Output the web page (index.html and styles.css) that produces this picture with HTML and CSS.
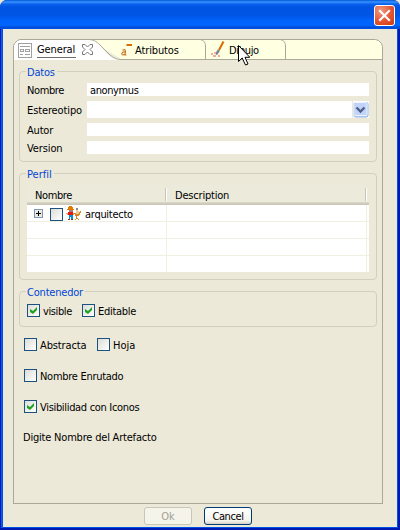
FILE: index.html
```
<!DOCTYPE html>
<html lang="es">
<head>
<meta charset="utf-8">
<title>Artefacto</title>
<link rel="stylesheet" href="styles.css">
</head>
<body>
<div class="window">
  <header class="titlebar">
    <button class="close" aria-label="Cerrar"><svg width="21" height="21" viewBox="0 0 21 21"><path d="M6 6l9 9M15 6l-9 9" stroke="#fff" stroke-width="2.2" stroke-linecap="square"/></svg></button>
  </header>
  <main class="client">
    <section class="folder">
      <nav class="tabs">
        <svg class="tabshape" width="370" height="21" viewBox="0 0 370 21">
          <path d="M75 .5H362.500L365.500 1.500L368.500 4.500L369.500 7.500V20.500H109Z" fill="#ffffe1"/>
          <path d="M.5 21V6.500L1.500 4.500L4.500 1.500L7 .5H75C92 .5 88 20.500 109 20.500V21Z" fill="#fff"/>
          <path d="M.5 21V6.500L1.500 4.500L4.500 1.500L7 .5H362.500L365.500 1.500L368.500 4.500L369.500 7.500V21M75 .5C80 .5 83 2 87 6L97 16C101 19 103 20.500 109 20.500H370M186 .5C190 .5 192.500 3 192.500 7V20.500M266 .5C270 .5 272.500 3 272.500 7V20.500" fill="none" stroke="#aca899"/>
        </svg>
        <div class="tab first">
          <svg class="formicon" width="14" height="15" viewBox="0 0 14 15" shape-rendering="crispEdges"><path d="M.5.5h13v14H.5zM2 3.500h10M2.500 6.500h3v2h-3zM7.500 6.500h4v2h-4zM2 11.500h3M7 11.500h5" fill="none" stroke="#a0a0a0"/></svg>
          <span class="t-general">General</span>
          <svg class="xicon" width="11" height="11" viewBox="0 0 11 11"><path d="M.5.500H3L5.500 3 8 .5h2.500V3L8 5.500 10.500 8v2.500H8L5.500 8 3 10.500H.5V8L3 5.500.5 3Z" fill="#fff" stroke="#777"/></svg>
        </div>
        <div class="tab second">
          <svg width="12" height="12" viewBox="0 0 12 12"><path d="M5.500 0H11V2H5.500Z" fill="#d96b00"/><path d="M1.500 6.200Q4.500 4.500 4.500 7.500L4 11H5.500M4.300 8Q.8 7.500.8 10 1 12 4 10" fill="none" stroke="#c7731f" stroke-width="1.100"/></svg>
          <span class="t-atr">Atributos</span>
        </div>
        <div class="tab third">
          <svg width="14" height="17" viewBox="0 0 14 17"><path d="M12.500.5L8 9" stroke="#d96b00" stroke-width="2"/><path d="M8 9L5 13.500" stroke="#808890" stroke-width="2.500"/><path d="M0 12h2v2H0zM3 11h2v2H3zM2 14h3v2H2zM7 14h2v2H7z" fill="#f4a9a4"/></svg>
          <span class="t-dib">Dibujo</span>
        </div>
      </nav>
      <div class="page">
        <fieldset class="datos">
          <legend class="t-datos">Datos</legend>
          <div class="fields">
            <label class="t-nom">Nombre</label><div class="input"><span class="t-anon">anonymus</span></div>
            <label class="t-est">Estereotipo</label>
            <div class="input combo"><svg width="17" height="17" viewBox="0 0 17 17"><rect width="1" height="17" fill="#ece9d8"/><rect x="2" y="1.500" width="14" height="14.500" rx="1.500" fill="#c1d3fb" stroke="#8fb0e0"/><rect x="2" y="1.500" width="13" height="13" rx="1" fill="none" stroke="#eef3ff"/><path d="M4.500 6.500l4 4 4-4" fill="none" stroke="#4d6185" stroke-width="2.400"/></svg></div>
            <label class="t-aut">Autor</label><div class="input"></div>
            <label class="t-ver">Version</label><div class="input"></div>
          </div>
        </fieldset>
        <fieldset class="perfil">
          <legend class="t-perfil">Perfil</legend>
          <div class="table">
            <div class="thead"><div><span class="t-nom">Nombre</span></div><div><span class="t-desc">Description</span></div></div>
            <div class="tr">
              <div class="node">
                <svg class="plus" width="9" height="9" viewBox="0 0 9 9" shape-rendering="crispEdges"><path d="M.5.5h8v8h-8z" fill="#eceae2" stroke="#7b98b8"/><path d="M2 4.500h5M4.500 2v5" stroke="#000"/></svg>
                <i class="box"></i>
                <svg class="people" width="16" height="15" viewBox="0 0 16 15" shape-rendering="crispEdges"><path d="M2 1h1V0h3v1h1v2H2zM1 3h7v1H1z" fill="#df7900"/><path d="M3 4h4v2H3z" fill="#b07870"/><path d="M2 6h5v3H2z" fill="#e01818"/><path d="M0 7h2v2H1v-1H0zM7 7h1v2H7z" fill="#f0a060"/><path d="M3 9h4v4H5v-2H4v2H3z" fill="#0a8ed0"/><path d="M2 13h2v1H2zM5 13h2v1H5z" fill="#803c18"/><path d="M10 3h2v2h1v3h-3z" fill="#e9cf91"/><path d="M10 2h2v2h-2z" fill="#858b91"/><path d="M14 5h1v2h-1v2h-1v1h-2v2h1v1h1v1h-1v-1h-2v1H9v-1h1v-3H9V8H8V7h2v1h3V6h1z" fill="#d98522"/></svg>
                <span class="t-arq">arquitecto</span>
              </div><div></div><div></div>
            </div>
            <div class="tr"><div></div><div></div><div></div></div>
            <div class="tr"><div></div><div></div><div></div></div>
            <div class="tr"><div></div><div></div><div></div></div>
          </div>
        </fieldset>
        <fieldset class="contenedor">
          <legend class="t-cont">Contenedor</legend>
          <div class="checks">
            <label class="check"><i class="box on"></i><span class="t-vis">visible</span></label>
            <label class="check"><i class="box on"></i><span class="t-edi">Editable</span></label>
          </div>
        </fieldset>
        <div class="options">
          <div class="checks">
            <label class="check abs"><i class="box"></i><span class="t-abs">Abstracta</span></label>
            <label class="check"><i class="box"></i><span class="t-hoja">Hoja</span></label>
          </div>
          <label class="check"><i class="box"></i><span class="t-enr">Nombre Enrutado</span></label>
          <label class="check"><i class="box on"></i><span class="t-ico">Visibilidad con Iconos</span></label>
        </div>
        <p class="message"><span class="t-dig">Digite Nombre del Artefacto</span></p>
      </div>
    </section>
    <footer class="actions">
      <button class="btn disabled" disabled><span>Ok</span></button>
      <button class="btn"><span class="t-can">Cancel</span></button>
    </footer>
  </main>
  <svg class="cursor" width="12" height="21" viewBox="0 0 12 21"><path d="M.5.5V16.500L4.200 13L7.500 20L10 19L7 12.300H11.800Z" fill="#fff" stroke="#000"/></svg>
</div>
</body>
</html>
```
FILE: styles.css
```
* { box-sizing: border-box; }
body { margin: 0; background: #ece9d8; }
body, button {
  font-family: "DejaVu Sans Condensed", "DejaVu Sans", sans-serif;
  font-stretch: condensed;
  font-size: 11px;
  line-height: 13px;
  color: #000;
}
span, legend, label { white-space: nowrap; }
svg { display: block; flex: none; }

.t-general, .t-atr, .t-est, .t-ver, .t-abs { letter-spacing: -.12px; }
.t-datos, .t-aut, .t-cont, .t-desc, .t-dig { letter-spacing: -.2px; }
.t-edi, .t-enr, .t-arq { letter-spacing: -.28px; }
.t-ico, .t-dib { letter-spacing: -.32px; }
.t-nom, .t-anon, .t-vis, .t-can { letter-spacing: -.4px; }

.window {
  position: relative;
  width: 400px;
  height: 530px;
  display: flex;
  flex-direction: column;
  background: #0019b0;
  border-radius: 7px 7px 0 0;
  overflow: hidden;
}
.titlebar {
  height: 29px;
  flex: none;
  display: flex;
  justify-content: flex-end;
  padding: 5px 5px 0 0;
  background: linear-gradient(#0058d8 0, #3a93ff 2px, #0a63ee 4px, #0054e3 7px, #0055e5 15px, #0064fb 21px, #0066ff 25px, #0052df 27px, #0041c4 29px);
}
.close {
  width: 21px;
  height: 21px;
  padding: 0;
  border: 1px solid #fff;
  border-radius: 3px;
  background: radial-gradient(circle at 30% 25%, #f09a80, #e35432 55%, #c93a12);
}
.close svg { margin: -1px; }
.client {
  flex: 1;
  margin: 0 3px 3px;
  padding: 10px 14px 0 10px;
  background: #ece9d8;
  box-shadow: 0 0 0 1px #0050e6, -1px 0 0 1px #0a5cf0;
}
.folder { height: 465px; display: flex; flex-direction: column; width: 370px; }
.tabs { position: relative; height: 21px; flex: none; display: flex; }
.tabshape { position: absolute; left: 0; top: 0; }
.tab { position: relative; display: flex; align-items: flex-start; }
.first { width: 107px; padding: 4px 0 0 5px; }
.first span { margin-left: 5px; width: 39px; height: 15px; border-bottom: 1px solid #716f64; }
.xicon { margin: 1px 0 0 6px; }
.second { width: 88px; padding: 5px 0 0 1px; }
.second span { margin-left: 2px; }
.third { padding: 2px 0 0 3px; }
.third span { margin: 3px 0 0 4px; }
.page { flex: 1; border: solid #aca899; border-width: 0 1px 1px; padding: 5px 5px 0; }

fieldset {
  width: 358px;
  margin: 0;
  padding: 0 7px;
  border: 1px solid #d0d0bf;
  border-radius: 4px;
  min-width: 0;
}
legend { padding: 0 2px 0 1px; margin-left: -1px; height: 13px; line-height: 15px; color: #0046d5; }
.datos { height: 97px; }
.fields {
  display: grid;
  grid-template-columns: 60px 282px;
  grid-template-rows: 13px 17px 13px 13px;
  row-gap: 5px;
  margin-top: 5px;
  align-items: center;
}
.fields label { padding-top: 1px; height: 13px; }
.input { height: 100%; background: #fff; padding: 1px 0 0 3px; }
.combo { display: flex; justify-content: flex-end; padding: 0; }

.perfil { height: 113px; margin-top: 5px; }
.table { width: 342px; margin-top: 5px; }
.thead {
  height: 20px;
  display: grid;
  grid-template-columns: 140px 200px;
  background: linear-gradient(#ebeadb 17px, #e0dccb 17px, #d6d2c2 18px, #cbc7b8 19px);
}
.thead div { height: 13px; margin-top: 3px; padding: 1px 0 0 8px; border-right: 1px solid #fff; box-shadow: inset -1px 0 #c7c5b2; }
.tr { display: grid; grid-template-columns: 140px 200px 2px; height: 17px; background: #fff; border-bottom: 1px solid #f1efe2; }
.tr:last-child { height: 16px; border: 0; }
.tr div { border-right: 1px solid #f1efe2; }
.tr div:last-child { border: 0; }
.node { display: flex; padding-left: 7px; }
.plus { margin-top: 4px; }
.node .box { margin: 3px 0 0 7px; }
.people { margin: 1px 0 0 3px; }
.node span { margin: 3px 0 0 3px; }

.box {
  flex: none;
  width: 13px;
  height: 13px;
  border: 1px solid #1c5180;
  background: linear-gradient(135deg, #dcdcd7, #fff);
  position: relative;
}
.on::after {
  content: "";
  position: absolute;
  left: 2px;
  top: 2px;
  width: 7px;
  height: 7px;
  background: #21a121;
  clip-path: polygon(0 29%, 43% 57%, 100% 0, 100% 43%, 43% 100%, 0 71%);
}
.contenedor { height: 42px; margin-top: 5px; }
.checks { display: flex; height: 13px; }
.contenedor .checks { margin-top: 6px; }
.check { display: flex; height: 13px; gap: 3px; }
.check span { padding-top: 1px; }
.contenedor .check:first-child { width: 55px; }
.options { display: flex; flex-direction: column; gap: 18px; padding: 11px 0 0 5px; }
.abs { width: 73px; }
.message { margin: 18px 0 0 4px; }

.actions { display: flex; gap: 12px; padding: 3px 0 0 131px; }
.btn {
  width: 48px;
  height: 18px;
  padding: 0;
  border: 1px solid #003c74;
  border-radius: 3px;
  background: linear-gradient(#fff, #f3f2ec 80%, #d6d0c5);
}
.btn span { display: block; margin-top: 1px; }
.disabled { border-color: #c9c7ba; background: #f5f4ea; color: #a1a192; }
.cursor { position: absolute; left: 238px; top: 45px; }
```
